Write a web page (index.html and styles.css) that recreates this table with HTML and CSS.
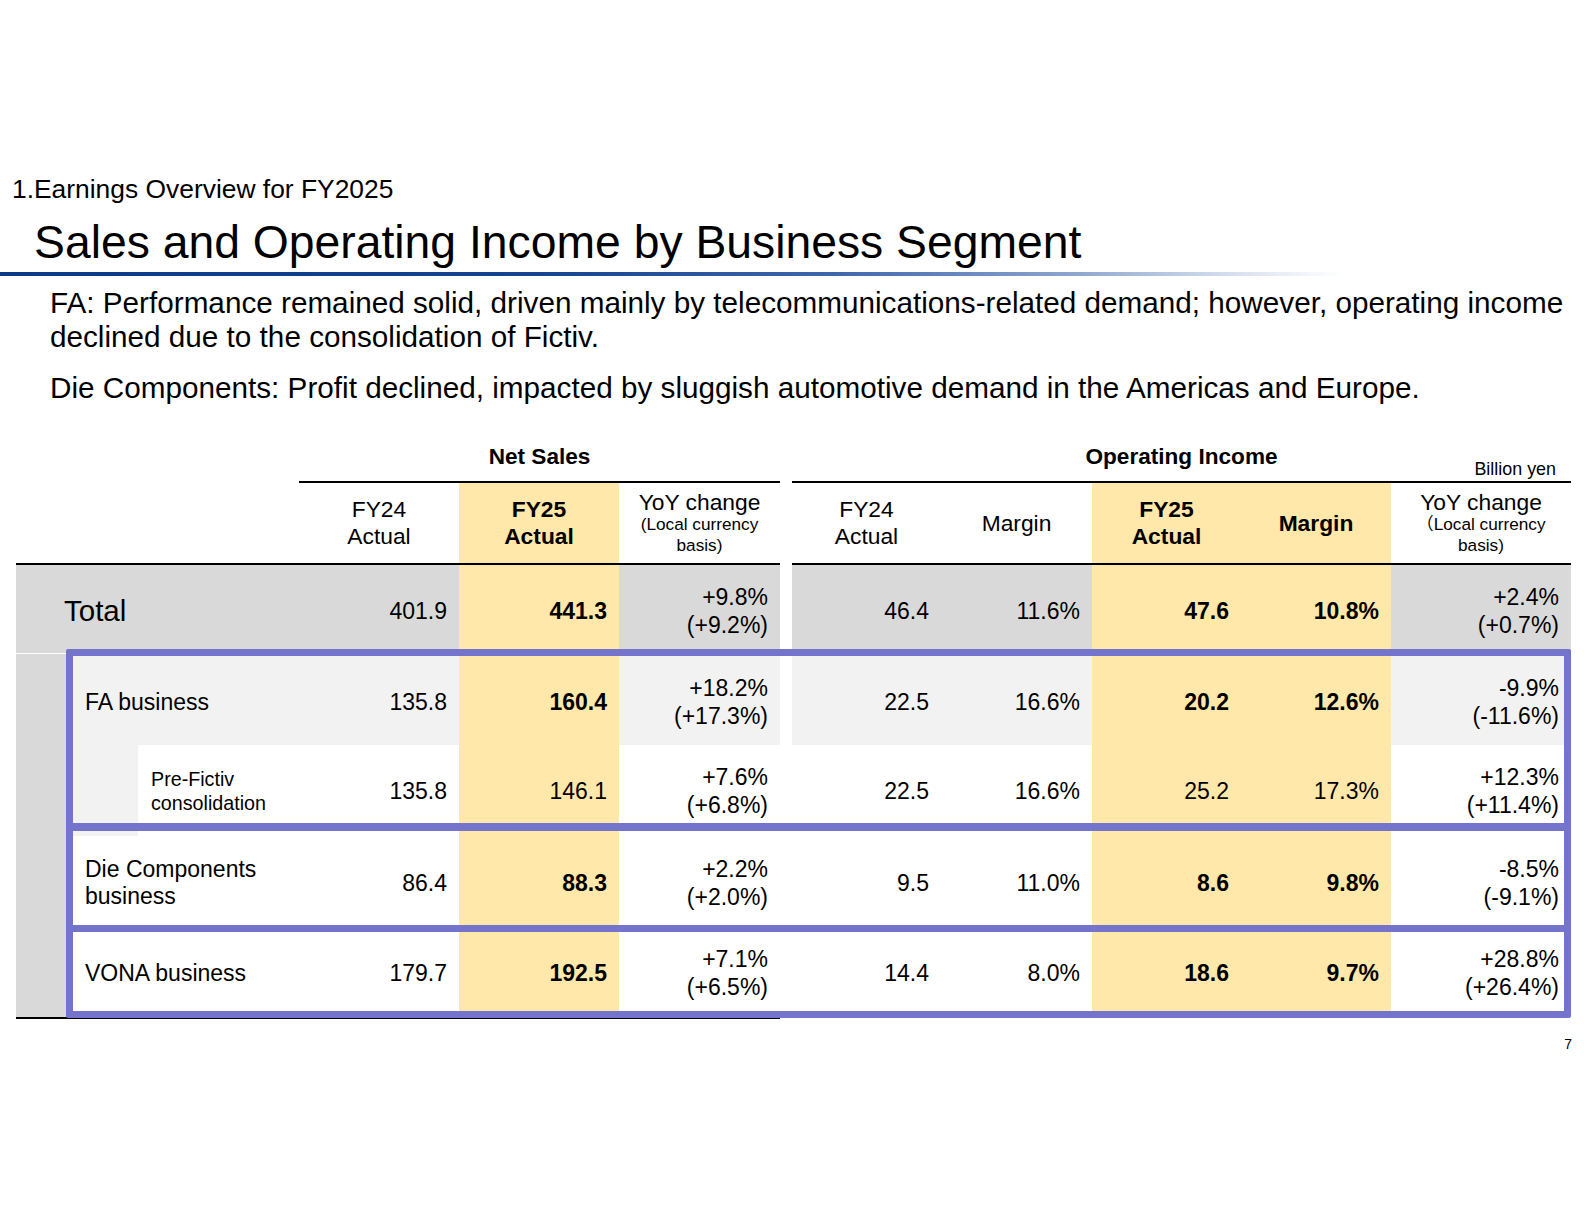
FILE: index.html
```html
<!DOCTYPE html>
<html lang="en">
<head>
<meta charset="utf-8">
<title>Sales and Operating Income by Business Segment</title>
<link rel="stylesheet" href="styles.css">
</head>
<body>
<div class="slide">
  <div class="section">1.Earnings Overview for FY2025</div>
  <h1 class="title">Sales and Operating Income by Business Segment</h1>
  <div class="title-rule"></div>
  <div class="summary">
    <p>FA: Performance remained solid, driven mainly by telecommunications-related demand; however, operating income<br>declined due to the consolidation of Fictiv.</p>
    <p>Die Components: Profit declined, impacted by sluggish automotive demand in the Americas and Europe.</p>
  </div>

  <div class="table">
    <div class="super">
      <div></div>
      <div class="grp">Net Sales</div>
      <div></div>
      <div class="grp grp-oi"><span></span><span>Operating Income</span><span class="unit">Billion yen</span></div>
    </div>

    <div class="row head">
      <div class="h"></div>
      <div class="h">FY24<br>Actual</div>
      <div class="h y b">FY25<br>Actual</div>
      <div class="h"><span class="yoy">YoY change</span><small>(Local currency<br>basis)</small></div>
      <div class="gap"></div>
      <div class="h">FY24<br>Actual</div>
      <div class="h">Margin</div>
      <div class="h y b">FY25<br>Actual</div>
      <div class="h y b">Margin</div>
      <div class="h"><span class="yoy">YoY change</span><small>（Local currency<br>basis)</small></div>
    </div>

    <div class="body">
      <div class="row r-total">
        <div class="lc g"><span class="total">Total</span></div>
        <div class="v g">401.9</div>
        <div class="v y b">441.3</div>
        <div class="v g">+9.8%<br>(+9.2%)</div>
        <div class="gap"></div>
        <div class="v g">46.4</div>
        <div class="v g">11.6%</div>
        <div class="v y b">47.6</div>
        <div class="v y b">10.8%</div>
        <div class="v g">+2.4%<br>(+0.7%)</div>
      </div>

      <div class="row r-fa">
        <div class="lc"><span class="band band-top"></span><span class="lab lg">FA business</span></div>
        <div class="v lg">135.8</div>
        <div class="v y b">160.4</div>
        <div class="v lg">+18.2%<br>(+17.3%)</div>
        <div class="gap"></div>
        <div class="v lg">22.5</div>
        <div class="v lg">16.6%</div>
        <div class="v y b">20.2</div>
        <div class="v y b">12.6%</div>
        <div class="v lg">-9.9%<br>(-11.6%)</div>
      </div>

      <div class="row r-pre">
        <div class="lc"><span class="band"></span><span class="indent"></span><span class="lab sub">Pre-Fictiv<br>consolidation</span></div>
        <div class="v">135.8</div>
        <div class="v y">146.1</div>
        <div class="v">+7.6%<br>(+6.8%)</div>
        <div class="gap"></div>
        <div class="v">22.5</div>
        <div class="v">16.6%</div>
        <div class="v y">25.2</div>
        <div class="v y">17.3%</div>
        <div class="v">+12.3%<br>(+11.4%)</div>
      </div>

      <div class="row r-die">
        <div class="lc"><span class="band"></span><span class="lab">Die Components<br>business</span></div>
        <div class="v">86.4</div>
        <div class="v y b">88.3</div>
        <div class="v">+2.2%<br>(+2.0%)</div>
        <div class="gap"></div>
        <div class="v">9.5</div>
        <div class="v">11.0%</div>
        <div class="v y b">8.6</div>
        <div class="v y b">9.8%</div>
        <div class="v">-8.5%<br>(-9.1%)</div>
      </div>

      <div class="row r-vona">
        <div class="lc"><span class="band"></span><span class="lab">VONA business</span></div>
        <div class="v">179.7</div>
        <div class="v y b">192.5</div>
        <div class="v">+7.1%<br>(+6.5%)</div>
        <div class="gap"></div>
        <div class="v">14.4</div>
        <div class="v">8.0%</div>
        <div class="v y b">18.6</div>
        <div class="v y b">9.7%</div>
        <div class="v">+28.8%<br>(+26.4%)</div>
      </div>

      <div class="box box-fa"></div>
      <div class="box box-die"></div>
      <div class="box box-vona"></div>
    </div>
    <div class="bottom-rule"></div>
  </div>

  <div class="pageno">7</div>
</div>
</body>
</html>
```

FILE: styles.css
```css
* { box-sizing: border-box; }

html, body {
  margin: 0;
  padding: 0;
  background: #ffffff;
}

body {
  font-family: "Liberation Sans", Arial, "Noto Sans CJK JP", sans-serif;
  color: #000000;
}

.slide {
  width: 1584px;
  height: 1224px;
  overflow: hidden;
}

.section {
  padding: 174px 0 0 12px;
  font-size: 26.4px;
  line-height: 30px;
}

.title {
  margin: 12px 0 0 34px;
  font-weight: normal;
  font-size: 46.3px;
  line-height: 52px;
}

.title-rule {
  margin-top: 4px;
  width: 1343px;
  height: 4px;
  background: linear-gradient(90deg, #0a3988 0%, #15438f 40%, #3d66aa 62%, #8ea6d0 80%, #dde5f2 93%, #ffffff 100%);
}

.summary {
  margin-top: 10px;
  padding-left: 50px;
  font-size: 29.7px;
  line-height: 34px;
}

.summary p { margin: 0; }
.summary p + p { margin-top: 17px; }

/* ---------- table ---------- */
.table {
  margin: 31px 0 0 16px;
  width: 1555px;
}

.super {
  display: grid;
  grid-template-columns: 283px 481px 12px 779px;
  height: 47px;
}

.grp {
  border-bottom: 2px solid #000;
  padding-top: 8px;
  text-align: center;
  font-weight: bold;
  font-size: 22.6px;
  line-height: 26px;
}

.grp-oi {
  display: grid;
  grid-template-columns: 1fr auto 1fr;
}

.unit {
  justify-self: end;
  align-self: end;
  padding: 0 15px 2px 0;
  font-weight: normal;
  font-size: 17.9px;
  line-height: 20px;
}

.row {
  display: grid;
  grid-template-columns: 283px 160px 160px 161px 12px 149px 151px 149px 150px 180px;
}

.head { height: 82px; }

.h {
  border-bottom: 2px solid #000;
  display: flex;
  flex-direction: column;
  justify-content: center;
  align-items: center;
  text-align: center;
  font-size: 22.8px;
  line-height: 27px;
}

.h .yoy { line-height: 24px; }

.h small {
  display: block;
  font-size: 17.2px;
  line-height: 21px;
}

.gap { background: #ffffff; }

.body { position: relative; }

.r-total { height: 88px; }
.r-fa { height: 92px; }
.r-pre { height: 91px; }
.r-die { height: 93px; }
.r-vona { height: 88px; }

.v {
  display: flex;
  align-items: center;
  justify-content: flex-end;
  padding-right: 12px;
  text-align: right;
  font-size: 23px;
  line-height: 28px;
}

.r-total .v { padding-top: 4px; }
.r-fa .v, .r-fa .lab { padding-top: 6px; }

.g { background: #d9d9d9; }
.lg { background: #f2f2f2; }
.y { background: #ffe8a9; }
.b { font-weight: bold; }

.lc { display: flex; }

.total {
  align-self: center;
  padding: 4px 0 0 48px;
  font-size: 29.5px;
  line-height: 32px;
}

.band {
  width: 50px;
  flex: none;
  background: #d9d9d9;
}

.band-top { border-top: 1px solid #ffffff; }

.indent {
  width: 72px;
  flex: none;
  background: #f2f2f2;
}

.lab {
  flex: 1;
  display: flex;
  align-items: center;
  padding-left: 19px;
  font-size: 23px;
  line-height: 27px;
}

.lab.sub {
  padding-left: 13px;
  font-size: 19.7px;
  line-height: 24px;
}

.box {
  position: absolute;
  left: 50px;
  width: 1505px;
  border: 7px solid #7474cc;
  border-radius: 2px;
}

.box-fa { top: 84px; height: 182px; }
.box-die { top: 258px; height: 109px; }
.box-vona { top: 360px; height: 93px; }

.bottom-rule {
  width: 764px;
  height: 2px;
  background: #000;
}

.pageno {
  margin-top: 17px;
  padding-right: 12px;
  text-align: right;
  font-size: 14px;
  line-height: 16px;
}
```
